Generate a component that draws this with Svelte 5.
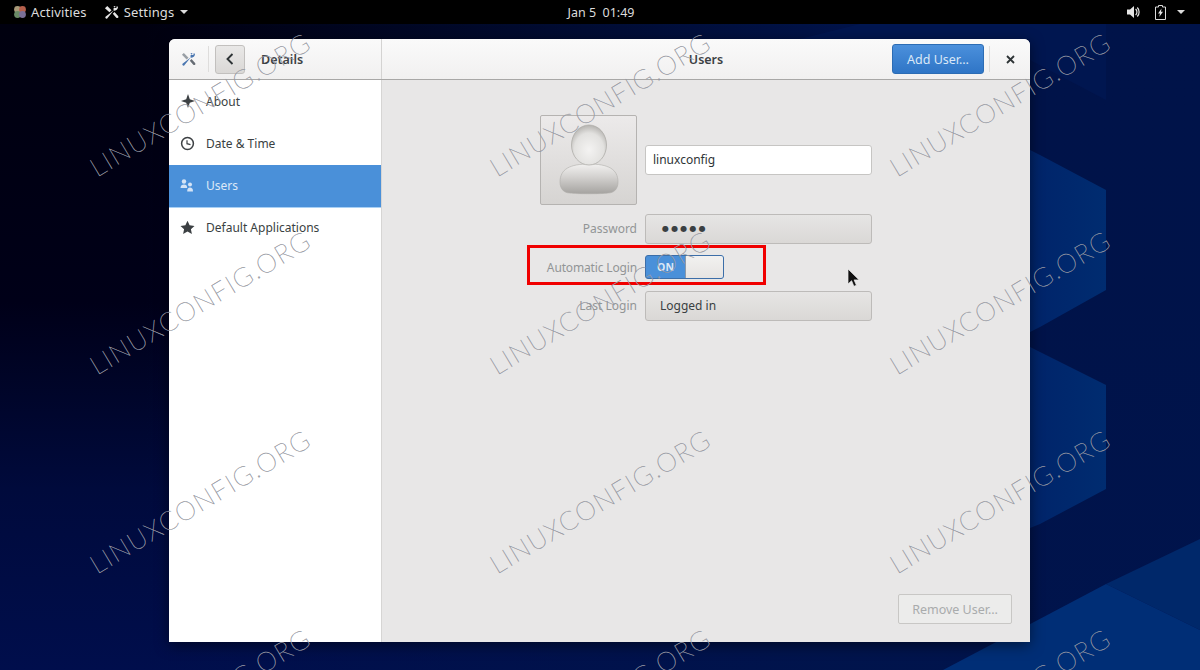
<script lang="ts">
	// Watermark grid: three columns, four rows, centres in page pixels
	const marks = [200, 600, 1000].flatMap((x) =>
		[104, 302, 501, 700].map((y) => ({ x, y }))
	);

	const navItems = [
		{ id: 'about', label: 'About' },
		{ id: 'date', label: 'Date & Time' },
		{ id: 'users', label: 'Users' },
		{ id: 'apps', label: 'Default Applications' }
	];
</script>

<div class="desktop">
	<svg class="wallpaper" viewBox="0 0 1200 670" aria-hidden="true">
		<defs>
			<linearGradient id="facet" x1="0" y1="0" x2="1" y2="0">
				<stop offset="0" stop-color="#00246a" />
				<stop offset="1" stop-color="#002c70" />
			</linearGradient>
		</defs>
		<polygon points="1030,150 1040,155 1106,190 1106,290 1040,327 1030,332" fill="url(#facet)" />
		<polygon points="1030,347 1040,352 1106,385 1106,489 1040,524 1030,528" fill="url(#facet)" />
		<polygon points="1106,584 1200,539 1200,630" fill="#00286a" />
		<polygon points="1106,584 1200,630 1200,670 943,670" fill="#002e76" />
		<polygon points="1106,24 860,24 800,39 1030,39 1030,60 1106,100" fill="#001650" />
	</svg>

	<header class="topbar">
		<div class="bar-left">
			<span class="activities">
				<svg width="14" height="14" viewBox="0 0 14 14">
					<circle cx="4.500" cy="4.500" r="3.400" fill="#a89a78" />
					<circle cx="9.500" cy="4.500" r="3.400" fill="#b5604c" />
					<circle cx="4.500" cy="9.500" r="3.400" fill="#6a8a66" />
					<circle cx="9.500" cy="9.500" r="3.400" fill="#7a6f98" />
				</svg>
				Activities
			</span>
			<span class="app-menu">
				<svg width="15" height="15" viewBox="0 0 16 16" fill="#e6e6e6">
					<path d="M1 3.500 3.500 1 8 5.500 5.800 7.600zM14.800 1.400a3.600 3.600 0 0 0-4.600 4.400L1.600 12.600a1.300 1.300 0 0 0 1.800 1.800l6.900-8.500a3.600 3.600 0 0 0 4.400-4.600l-2 2-1.900-.5-.5-1.800z" />
					<path d="M9.400 9.200 11.200 7.400 15 11.600a1.300 1.300 0 0 1-1.900 1.900z" />
				</svg>
				Settings
				<i class="caret"></i>
			</span>
		</div>
		<div class="clock">Jan 5&nbsp; 01:49</div>
		<div class="bar-right">
			<svg class="volume" width="14" height="14" viewBox="0 0 14 14" fill="#e6e6e6">
				<path d="M0 4.500h3L7 1v12L3 9.500H0z" />
				<path d="M8.600 4a4 4 0 0 1 0 6M10.300 2.500a6.500 6.500 0 0 1 0 9" fill="none" stroke="#e6e6e6" stroke-width="1.200" />
			</svg>
			<svg width="11" height="15" viewBox="0 0 11 15">
				<path d="M3.500 .5h4v1.500h3v12.500H.5V2h3z" fill="none" stroke="#dcdcdc" />
				<path d="M6.500 3.500 3 8.500h2L4.200 12 8 6.800H6z" fill="#e6e6e6" />
			</svg>
			<i class="caret"></i>
		</div>
	</header>

	<section class="window">
		<div class="titlebar">
			<div class="title-side">
				<svg class="tools" width="15" height="15" viewBox="0 0 16 16">
					<path d="M1 3 3 1l5 5-2 2z" fill="#9aa0a6" />
					<path d="M14.800 1.400a3.600 3.600 0 0 0-4.600 4.400L1.600 12.600a1.300 1.300 0 0 0 1.800 1.800l6.900-8.500a3.600 3.600 0 0 0 4.400-4.600l-2 2-1.900-.5-.5-1.800z" fill="#4a76b0" />
					<path d="M9.400 9.200 11.200 7.400 15 11.600a1.300 1.300 0 0 1-1.900 1.900z" fill="#666c74" />
				</svg>
				<span class="sep"></span>
				<button class="back" aria-label="Back">
					<svg width="10" height="12" viewBox="0 0 10 12">
						<path d="M7.500 1 2.500 6l5 5" fill="none" stroke="#2e3436" stroke-width="1.900" />
					</svg>
				</button>
				<span class="side-title">Details</span>
			</div>
			<div class="title-main">
				<span class="main-title">Users</span>
				<button class="add-user">Add User…</button>
				<span class="sep sep-close"></span>
				<button class="close" aria-label="Close">
					<svg width="9" height="9" viewBox="0 0 9 9">
						<path d="M1 1l7 7M8 1 1 8" stroke="#2e3436" stroke-width="1.800" />
					</svg>
				</button>
			</div>
		</div>

		<div class="body">
			<nav class="sidebar">
				{#each navItems as item}
					<div class="nav-row" class:active={item.id === 'users'}>
						<span class="nav-icon">
							{#if item.id === 'about'}
								<svg width="16" height="16" viewBox="0 0 16 16">
									<path d="M8 1 9.800 6.200 15 8 9.800 9.800 8 15 6.200 9.800 1 8 6.200 6.200z" fill="#3c4043" />
								</svg>
							{:else if item.id === 'date'}
								<svg width="15" height="15" viewBox="0 0 15 15">
									<circle cx="7.500" cy="7.500" r="5.900" fill="none" stroke="#3c4043" stroke-width="1.500" />
									<path d="M7 4.200v3.500l3.500 1" fill="none" stroke="#3c4043" stroke-width="1.200" />
								</svg>
							{:else if item.id === 'users'}
								<svg width="14" height="14" viewBox="0 0 14 14" fill="#d5e4f6">
									<circle cx="4" cy="3.500" r="2.200" />
									<path d="M.5 10c0-2.500 1.500-3.500 3.500-3.500S7.200 7.500 7.200 10z" />
									<circle cx="10" cy="6.500" r="2" />
									<path d="M7.200 13.500c0-3 1-4 2.800-4s3 1 3 4z" />
								</svg>
							{:else}
								<svg width="15" height="15" viewBox="0 0 15 15">
									<path d="M7.500 .8 9.600 5.300l4.900.6-3.600 3.300 1 4.900-4.400-2.500-4.400 2.500 1-4.900L.5 5.900l4.900-.6z" fill="#3c4043" />
								</svg>
							{/if}
						</span>
						{item.label}
					</div>
				{/each}
			</nav>

			<main class="content">
				<div class="form">
					<div class="avatar">
						<svg width="72" height="78" viewBox="0 0 72 78">
							<defs>
								<radialGradient id="headFill" cx=".5" cy=".62" r=".6">
									<stop offset="0" stop-color="#f4f3f2" />
									<stop offset=".7" stop-color="#e2e1df" />
									<stop offset="1" stop-color="#b9b7b4" />
								</radialGradient>
								<linearGradient id="bodyFill" x1="0" y1="0" x2="0" y2="1">
									<stop offset="0" stop-color="#f2f1f0" />
									<stop offset=".45" stop-color="#d2d0ce" />
									<stop offset="1" stop-color="#a5a3a0" />
								</linearGradient>
							</defs>
							<path d="M7 62C7 49 17 44 36 44s29 5 29 18c0 7-4 11-10 11-6 1-32 1-38 0C11 73 7 69 7 62z" fill="url(#bodyFill)" stroke="#aeaca9" stroke-width=".6" />
							<ellipse cx="36" cy="25" rx="17.500" ry="20" fill="url(#headFill)" stroke="#a9a7a4" stroke-width=".7" />
						</svg>
					</div>
					<div class="entry">linuxconfig</div>

					<div class="label ctl-h">Password</div>
					<div class="field ctl-h"><span class="dots">●●●●●</span></div>

					<div class="label switch-h">Automatic Login</div>
					<div class="switch">
						<span class="switch-on">ON</span>
						<span class="switch-knob"></span>
					</div>

					<div class="label ctl-h">Last Login</div>
					<div class="field ctl-h">Logged in</div>
				</div>
				<button class="remove-user">Remove User…</button>
			</main>
		</div>
	</section>

	<div class="highlight"></div>

	<svg class="pointer" width="14" height="20" viewBox="0 0 14 20">
		<path d="M1 1v15l3.600-3.300 2.300 5.600 2.500-1-2.300-5.400h5z" fill="#111" stroke="#eee" stroke-width=".7" />
	</svg>

	{#each marks as m}
		<span class="mark" style="left: {m.x}px; top: {m.y}px">LINUXCONFIG.ORG</span>
	{/each}
</div>

<style>
	:global(body) {
		margin: 0;
		background: #000;
	}

	.desktop {
		position: relative;
		width: 1200px;
		height: 670px;
		overflow: hidden;
		font-family: "Noto Sans", "Open Sans", sans-serif;
		font-size: 12.5px;
		color: #2e3436;
		background:
			linear-gradient(to right, rgba(0, 20, 76, 0) 12%, rgba(0, 20, 76, 0.95) 70%),
			linear-gradient(to bottom, #00000e 0%, #000018 45%, #000a3c 73%, #000e4c 100%);
	}

	.wallpaper {
		position: absolute;
		inset: 0;
		width: 100%;
		height: 100%;
	}

	/* top bar */
	.topbar {
		position: relative;
		height: 24px;
		background: #000;
		color: #dcdcdc;
		display: grid;
		grid-template-columns: 1fr auto 1fr;
		align-items: center;
		font-size: 13px;
		letter-spacing: 0.15px;
	}

	.bar-left {
		display: flex;
		align-items: center;
		padding-left: 13px;
		gap: 17px;
	}

	.activities,
	.app-menu {
		display: flex;
		align-items: center;
		gap: 4px;
	}

	.app-menu {
		gap: 5px;
	}

	.clock {
		margin-left: 2px;
		font-size: 12.5px;
		letter-spacing: 0;
	}

	.bar-right {
		display: flex;
		align-items: center;
		justify-content: flex-end;
		gap: 10px;
		padding-right: 15px;
	}

	.volume {
		margin-right: 4px;
	}

	.caret {
		display: inline-block;
		width: 0;
		height: 0;
		border-left: 4px solid transparent;
		border-right: 4px solid transparent;
		border-top: 4px solid #dcdcdc;
		margin-left: 1px;
	}

	/* settings window */
	.window {
		position: absolute;
		left: 169px;
		top: 39px;
		width: 861px;
		height: 603px;
		border-radius: 6px 6px 0 0;
		overflow: hidden;
		display: flex;
		flex-direction: column;
		background: #e8e7e7;
		box-shadow: 0 3px 14px rgba(0, 0, 0, 0.5);
	}

	.titlebar {
		height: 40px;
		flex: none;
		display: flex;
		background: linear-gradient(#fafafa, #f1f0f0);
		border-bottom: 1px solid #a8a7a6;
	}

	.title-side {
		width: 213px;
		flex: none;
		display: flex;
		align-items: center;
		border-right: 1px solid #d4d3d2;
		box-sizing: border-box;
	}

	.tools {
		margin-left: 12px;
	}

	.sep {
		width: 1px;
		height: 26px;
		background: #dedddc;
		margin-left: 12px;
	}

	.back {
		width: 30px;
		height: 29px;
		margin-left: 6px;
		padding: 0;
		border: 1px solid #c2c0be;
		border-radius: 3px;
		background: linear-gradient(#e9e8e7, #dad8d6);
		display: flex;
		align-items: center;
		justify-content: center;
	}

	.side-title,
	.main-title {
		font-weight: 600;
		color: #3c4144;
	}

	.side-title {
		margin-left: 16px;
	}

	.title-main {
		position: relative;
		flex: 1;
		display: flex;
		align-items: center;
		justify-content: flex-end;
	}

	.main-title {
		position: absolute;
		left: 0;
		right: 0;
		text-align: center;
	}

	.add-user {
		position: relative;
		width: 92px;
		height: 30px;
		padding: 0;
		font: inherit;
		color: #dbe8f7;
		border: 1px solid #2c6cb4;
		border-radius: 3px;
		background: linear-gradient(#4b90dc, #2f75c6);
	}

	.sep-close {
		margin-left: 5px;
	}

	.close {
		width: 40px;
		padding: 0;
		border: 0;
		background: none;
		display: flex;
		justify-content: center;
	}

	.body {
		flex: 1;
		display: flex;
		min-height: 0;
	}

	.sidebar {
		width: 212px;
		flex: none;
		padding-top: 1px;
		background: #fff;
		border-right: 1px solid #d6d5d4;
		font-size: 12px;
	}

	.nav-row {
		height: 42px;
		box-sizing: border-box;
		padding-bottom: 2px;
		display: flex;
		align-items: center;
		color: #3a3f42;
	}

	.nav-row.active {
		background: #4a90d9;
		color: #dde9f7;
		box-shadow: 0 1px 0 #a8d0f5;
	}

	.nav-icon {
		width: 37px;
		padding-left: 11px;
		box-sizing: border-box;
		display: flex;
		flex: none;
	}

	.content {
		flex: 1;
		display: flex;
		flex-direction: column;
		align-items: center;
		padding: 35px 18px 18px;
		background: #e8e7e7;
		position: relative;
	}

	.form {
		display: grid;
		grid-template-columns: 97px 227px;
		grid-template-rows: 90px 32px 27px 30px;
		column-gap: 8px;
		row-gap: 9px;
		align-items: start;
		flex: 1;
		align-content: start;
		font-size: 12px;
	}

	.avatar {
		height: 90px;
		box-sizing: border-box;
		border: 1px solid #b5b3b1;
		border-radius: 2px;
		background: linear-gradient(#eceaea, #d6d4d2);
		display: flex;
		align-items: flex-end;
		justify-content: center;
		padding-bottom: 6px;
	}

	.entry {
		margin-top: 30px;
		height: 30px;
		box-sizing: border-box;
		padding: 0 7px;
		line-height: 28px;
		background: #fff;
		border: 1px solid #c6c5c3;
		border-radius: 3px;
	}

	.label {
		text-align: right;
		color: #929596;
		white-space: nowrap;
	}

	.label.ctl-h {
		line-height: 29px;
	}

	.ctl-h {
		height: 30px;
		line-height: 28px;
	}

	.switch-h {
		line-height: 25px;
		letter-spacing: -0.15px;
	}

	.field {
		box-sizing: border-box;
		padding: 0 14px;
		border: 1px solid #bdbbb9;
		border-radius: 3px;
		background: linear-gradient(#e6e5e4, #dad8d6);
		color: #3a3f42;
	}

	.dots {
		font-family: "DejaVu Sans", sans-serif;
		font-size: 8px;
		letter-spacing: 2.2px;
		color: #3a3f42;
		position: relative;
		top: -2px;
		left: 2px;
	}

	.switch {
		width: 79px;
		height: 24px;
		box-sizing: border-box;
		display: flex;
		border: 1px solid #3c6ea8;
		border-radius: 3px;
		overflow: hidden;
		background: #4a90d9;
	}

	.switch-on {
		width: 39px;
		text-align: center;
		line-height: 22px;
		font-size: 10.5px;
		font-weight: 700;
		color: #dce8f6;
	}

	.switch-knob {
		flex: 1;
		background: linear-gradient(#f2f1f0, #e6e4e2);
		border-left: 1px solid #8c99a8;
	}

	.remove-user {
		align-self: flex-end;
		width: 114px;
		height: 30px;
		padding: 0;
		font: inherit;
		color: #a9abac;
		border: 1px solid #c8c7c5;
		border-radius: 2px;
		background: #ececeb;
	}

	/* annotation drawn over the screenshot */
	.highlight {
		position: absolute;
		left: 527px;
		top: 245px;
		width: 239px;
		height: 40px;
		box-sizing: border-box;
		border: 3px solid #f00000;
	}

	.pointer {
		position: absolute;
		left: 847px;
		top: 268px;
	}

	.mark {
		position: absolute;
		transform: translate(-50%, -50%) rotate(-31deg);
		font-family: "Lato", "Liberation Sans", sans-serif;
		font-weight: 100;
		font-size: 26px;
		letter-spacing: 1.500px;
		white-space: nowrap;
		color: rgb(150, 152, 162);
		-webkit-text-stroke: 0.35px rgb(150, 152, 162);
		pointer-events: none;
	}
</style>
